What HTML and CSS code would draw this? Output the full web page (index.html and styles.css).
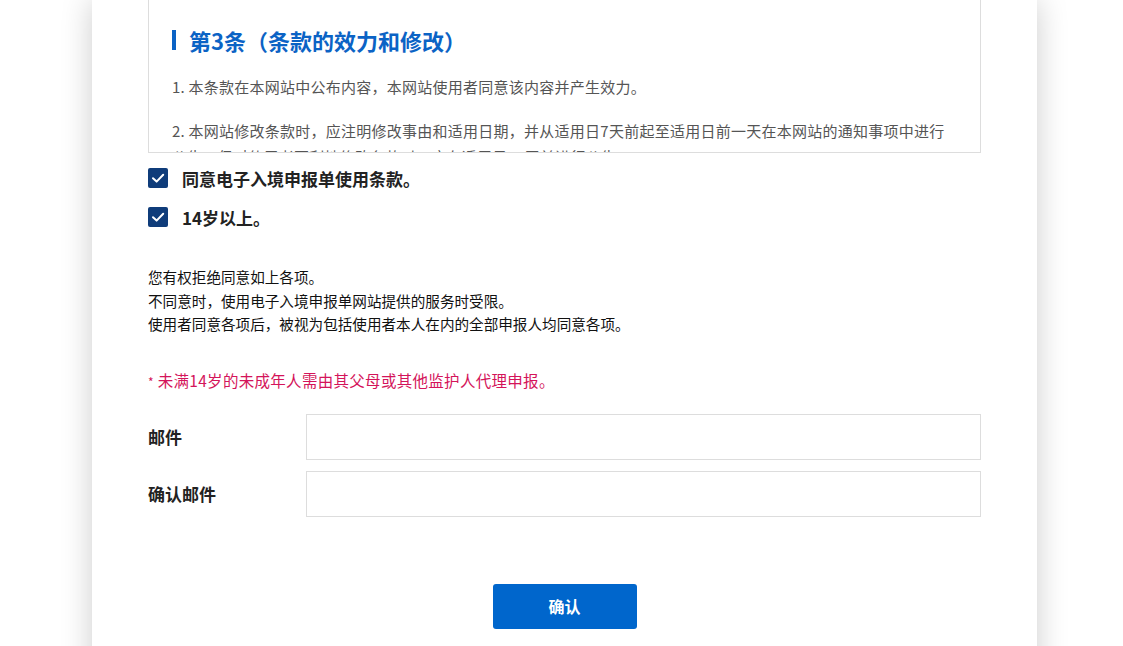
FILE: index.html
```html
<!DOCTYPE html>
<html lang="zh-CN">
<head>
    <meta charset="UTF-8">
    <meta name="viewport" content="width=device-width, initial-scale=1.0">
    <title>电子入境申报单</title>
    <link rel="stylesheet" href="styles.css">
</head>
<body>
    <div class="page">
        <div class="card">
            <div class="terms">
                <h3 class="terms-title">第3条（条款的效力和修改）</h3>
                <p>1. 本条款在本网站中公布内容，本网站使用者同意该内容并产生效力。</p>
                <p>2. 本网站修改条款时，应注明修改事由和适用日期，并从适用日7天前起至适用日前一天在本网站的通知事项中进行公告。但对使用者不利地修改条款时，应在适用日30天前进行公告。</p>
            </div>

            <div class="agree-list">
                <label class="agree">
                    <span class="check"><svg width="20" height="20" viewBox="0 0 20 20"><path d="M5 10.2 L8.6 13.6 L15.2 6.8" fill="none" stroke="#fff" stroke-width="2" stroke-linecap="round" stroke-linejoin="round"/></svg></span>
                    同意电子入境申报单使用条款。
                </label>
                <label class="agree">
                    <span class="check"><svg width="20" height="20" viewBox="0 0 20 20"><path d="M5 10.2 L8.6 13.6 L15.2 6.8" fill="none" stroke="#fff" stroke-width="2" stroke-linecap="round" stroke-linejoin="round"/></svg></span>
                    14岁以上。
                </label>
            </div>

            <div class="notice">
                <div>您有权拒绝同意如上各项。</div>
                <div>不同意时，使用电子入境申报单网站提供的服务时受限。</div>
                <div>使用者同意各项后，被视为包括使用者本人在内的全部申报人均同意各项。</div>
            </div>

            <p class="warn"><span class="star">*</span> 未满14岁的未成年人需由其父母或其他监护人代理申报。</p>

            <div class="form">
                <div class="form-label">邮件</div>
                <div class="form-input"></div>
                <div class="form-label">确认邮件</div>
                <div class="form-input"></div>
            </div>

            <div class="actions">
                <button class="btn">确认</button>
            </div>
        </div>
    </div>
</body>
</html>
```

FILE: styles.css
```css
body {
    margin: 0;
    background-color: #fff;
    font-family: "Noto Sans CJK SC", "Noto Sans", sans-serif;
    color: #111;
    overflow: hidden;
}
.page {
    padding-left: 6px;
}
.card {
    width: 945px;
    margin: 0 auto;
    box-sizing: border-box;
    padding: 0 56px 80px;
    background-color: #fff;
    box-shadow: 0 0 30px rgba(0, 0, 0, 0.2);
}
.terms {
    height: 153px;
    box-sizing: border-box;
    overflow: hidden;
    border: 1px solid #ddd;
    border-top: 0;
    padding: 25px 30px 0 23px;
    color: #555;
    font-size: 15px;
    letter-spacing: 0.25px;
}
.terms-title {
    margin: 0 0 19px;
    font-size: 22px;
    line-height: 30px;
    font-weight: bold;
    letter-spacing: 0;
    color: #0b63c5;
    display: flex;
    align-items: center;
}
.terms-title::before {
    content: "";
    width: 4px;
    height: 20px;
    background-color: #0b63c5;
    margin-right: 13px;
}
.terms p {
    margin: 0 0 18px;
    line-height: 26px;
}
.agree-list {
    margin-top: 15px;
    display: flex;
    flex-direction: column;
    gap: 19px;
}
.agree {
    display: flex;
    align-items: center;
    height: 20px;
    font-size: 17px;
    font-weight: bold;
    color: #222;
}
.check {
    width: 20px;
    height: 20px;
    border-radius: 2px;
    background-color: #0f3c7a;
    margin-right: 14px;
    display: flex;
}
.notice {
    margin-top: 38px;
    font-size: 14.6px;
    line-height: 23.5px;
    color: #111;
}
.warn {
    margin: 33px 0 0;
    font-size: 15.5px;
    line-height: 23px;
    letter-spacing: 0.3px;
    color: #d4145a;
}
.star {
    font-size: 12px;
}
.form {
    margin-top: 21px;
    display: grid;
    grid-template-columns: 158px 1fr;
    row-gap: 11px;
    align-items: center;
}
.form-label {
    font-size: 17px;
    font-weight: bold;
    color: #222;
}
.form-input {
    height: 46px;
    box-sizing: border-box;
    border: 1px solid #ddd;
}
.actions {
    margin-top: 67px;
    display: flex;
    justify-content: center;
}
.btn {
    width: 144px;
    height: 45px;
    border: 0;
    border-radius: 3px;
    background-color: #0066cc;
    color: #fff;
    font-family: inherit;
    font-size: 16px;
    font-weight: bold;
}
```
